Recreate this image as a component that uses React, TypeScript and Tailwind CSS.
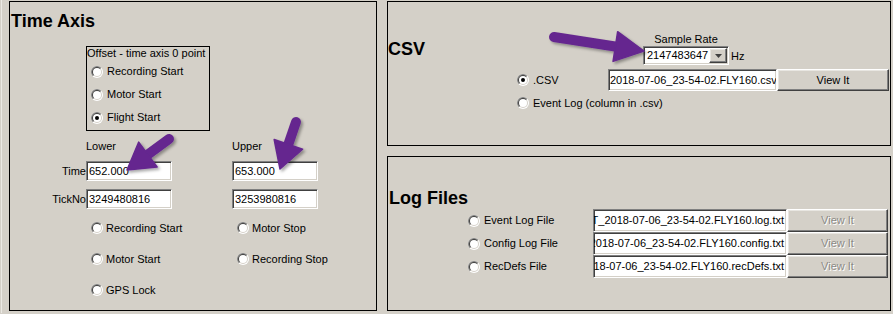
import React from "react";

const sunken =
  "border border-t-[#808080] border-l-[#808080] border-b-white border-r-white shadow-[inset_1px_1px_0_#404040,inset_-1px_-1px_0_#d4d0c8]";
const raised =
  "border border-t-white border-l-white border-b-[#404040] border-r-[#404040] shadow-[inset_-1px_-1px_0_#808080,inset_1px_1px_0_#e8e6e1]";

function Radio({ checked }: { checked?: boolean }) {
  return (
    <svg width="12" height="12" viewBox="0 0 12 12" className="shrink-0">
      <circle cx="6" cy="6" r="6" fill="#ffffff" />
      <path d="M1.757 10.243A6 6 0 0 1 10.243 1.757Z" fill="#808080" />
      <circle cx="6" cy="6" r="5" fill="#d4d0c8" />
      <path d="M2.464 9.536A5 5 0 0 1 9.536 2.464Z" fill="#404040" />
      <circle cx="6" cy="6" r="4" fill="#ffffff" />
      {checked && <circle cx="6" cy="6" r="2" fill="#000000" />}
    </svg>
  );
}

function Arrow({
  tail,
  tip,
  shaft,
  headLen,
  headW,
}: {
  tail: [number, number];
  tip: [number, number];
  shaft: number;
  headLen: number;
  headW: number;
}) {
  const dx = tip[0] - tail[0];
  const dy = tip[1] - tail[1];
  const L = Math.hypot(dx, dy);
  const ux = dx / L;
  const uy = dy / L;
  const px = -uy;
  const py = ux;
  const bx = tip[0] - ux * headLen;
  const by = tip[1] - uy * headLen;
  const pts = [
    [tip[0], tip[1]],
    [bx + (px * headW) / 2, by + (py * headW) / 2],
    [bx - (px * headW) / 2, by - (py * headW) / 2],
  ]
    .map((p) => p.join(","))
    .join(" ");
  return (
    <g>
      <line
        x1={tail[0]}
        y1={tail[1]}
        x2={bx + ux * 3}
        y2={by + uy * 3}
        stroke="#65288f"
        strokeWidth={shaft}
        strokeLinecap="round"
      />
      <polygon points={pts} fill="#65288f" strokeLinejoin="round" stroke="#65288f" strokeWidth="1.5" />
    </g>
  );
}

function FileBox({ text, w, h }: { text: string; w: string; h: string }) {
  return (
    <div className={`${w} ${h} ${sunken} bg-white flex items-center justify-end overflow-hidden whitespace-nowrap pr-[2px]`}>
      <span className="shrink-0">{text}</span>
    </div>
  );
}

export default function App() {
  const logRows = [
    { label: "Event Log File", file: "EVT_2018-07-06_23-54-02.FLY160.log.txt" },
    { label: "Config Log File", file: "EVT_2018-07-06_23-54-02.FLY160.config.txt" },
    { label: "RecDefs File", file: "EVT_2018-07-06_23-54-02.FLY160.recDefs.txt" },
  ];
  return (
    <div className="relative w-[893px] h-[314px] bg-[#d4d0c8] overflow-hidden text-[11px] leading-[13px] text-black font-['Liberation_Sans',Arial,sans-serif]">
      <div className="flex pt-[1px] pl-[1px]">
        <div className="w-[1px] h-[313px] bg-[#ebe9e4] mt-[-1px] mr-[7px]" />
        {/* Left panel */}
        <div className="w-[368px] h-[310px] border border-black flex flex-col shrink-0">
          <div className="mt-[9px] ml-[1px] text-[18px] leading-[21px] font-bold">Time Axis</div>
          <div className="mt-[14px] ml-[76px] w-[124px] h-[85px] border border-black flex flex-col">
            <div className="leading-[13px]">Offset - time axis 0 point</div>
            {["Recording Start", "Motor Start", "Flight Start"].map((t, i) => (
              <div key={t} className="h-[23px] flex items-center gap-[4px] pl-[4px]">
                <Radio checked={i === 2} />
                <span>{t}</span>
              </div>
            ))}
          </div>
          <div className="mt-[9px] ml-[76px] flex">
            <div className="w-[146px]">Lower</div>
            <div>Upper</div>
          </div>
          <div className="mt-[8px] flex items-center">
            <div className="w-[76px] text-right">Time</div>
            <div className={`w-[86px] h-[20px] bg-white ${sunken} flex items-center pl-[2px]`}>652.000</div>
            <div className={`ml-[60px] w-[86px] h-[20px] bg-white ${sunken} flex items-center pl-[2px]`}>653.000</div>
          </div>
          <div className="mt-[8px] flex items-center">
            <div className="w-[76px] text-right">TickNo</div>
            <div className={`w-[86px] h-[20px] bg-white ${sunken} flex items-center pl-[2px]`}>3249480816</div>
            <div className={`ml-[60px] w-[86px] h-[20px] bg-white ${sunken} flex items-center pl-[2px]`}>3253980816</div>
          </div>
          <div className="mt-[9px] ml-[81px] flex flex-col gap-[11px]">
            {[
              ["Recording Start", "Motor Stop"],
              ["Motor Start", "Recording Stop"],
              ["GPS Lock", ""],
            ].map(([a, b]) => (
              <div key={a} className="h-[20px] flex items-center">
                <div className="w-[146px] flex items-center gap-[3px]">
                  <Radio />
                  <span>{a}</span>
                </div>
                {b && (
                  <div className="flex items-center gap-[3px]">
                    <Radio />
                    <span>{b}</span>
                  </div>
                )}
              </div>
            ))}
          </div>
        </div>

        {/* Right column */}
        <div className="ml-[10px] w-[504px] flex flex-col gap-[10px] shrink-0">
          {/* CSV */}
          <div className="h-[145px] border border-black flex flex-col">
            <div className="flex">
              <div className="w-[255px] mt-[37px] text-[18px] leading-[21px] font-bold">CSV</div>
              <div className="mt-[31px] flex flex-col">
                <div className="w-[86px] text-center">Sample Rate</div>
                <div className="flex items-center">
                  <div className={`w-[86px] h-[19px] bg-white ${sunken} flex items-center`}>
                    <span className="flex-1 pl-[3px]">2147483647</span>
                    <div className={`w-[18px] h-[15px] mr-[1px] bg-[#d4d0c8] ${raised} flex items-center justify-center`}>
                      <svg width="7" height="4" viewBox="0 0 7 4">
                        <path d="M0 0H7L3.5 4Z" fill="#404040" />
                      </svg>
                    </div>
                  </div>
                  <span className="ml-[2px] mt-[2px]">Hz</span>
                </div>
              </div>
            </div>
            <div className="mt-[4px] h-[22px] flex items-center">
              <div className="ml-[129px] w-[91px] flex items-center gap-[4px]">
                <Radio checked />
                <span>.CSV</span>
              </div>
              <div className={`w-[169px] h-[22px] bg-white ${sunken} flex items-center pl-[1px] overflow-hidden whitespace-nowrap`}>
                2018-07-06_23-54-02.FLY160.csv
              </div>
              <div className={`w-[112px] h-[22px] bg-[#d4d0c8] ${raised} flex items-center justify-center`}>View It</div>
            </div>
            <div className="mt-[2px] h-[20px] ml-[129px] flex items-center gap-[4px]">
              <Radio />
              <span>Event Log (column in .csv)</span>
            </div>
          </div>

          {/* Log Files */}
          <div className="h-[155px] border border-black flex flex-col">
            <div className="mt-[31px] ml-[1px] text-[18px] leading-[21px] font-bold">Log Files</div>
            {logRows.map((r) => (
              <div key={r.label} className="h-[23px] flex items-center">
                <div className="ml-[80px] w-[125px] flex items-center gap-[4px]">
                  <Radio />
                  <span>{r.label}</span>
                </div>
                <FileBox text={r.file} w="w-[194px]" h="h-[23px]" />
                <div
                  className={`w-[101px] h-[23px] bg-[#d4d0c8] ${raised} flex items-center justify-center text-[#8c8a85] [text-shadow:1px_1px_0_#ffffff]`}
                >
                  View It
                </div>
              </div>
            ))}
          </div>
        </div>
      </div>

      {/* Annotation arrows */}
      <svg className="absolute inset-0 pointer-events-none" width="893" height="314" viewBox="0 0 893 314">
        <defs>
          <filter id="sh" x="-20%" y="-20%" width="140%" height="140%">
            <feDropShadow dx="2" dy="2" stdDeviation="1.5" floodColor="#000000" floodOpacity="0.35" />
          </filter>
        </defs>
        <g filter="url(#sh)">
          <Arrow tail={[169, 139]} tip={[127, 170]} shaft={10} headLen={26} headW={31} />
          <Arrow tail={[296, 122]} tip={[280, 169]} shaft={10} headLen={26} headW={30} />
          <Arrow tail={[554, 37]} tip={[644, 51]} shaft={10} headLen={29} headW={30} />
        </g>
      </svg>
    </div>
  );
}
